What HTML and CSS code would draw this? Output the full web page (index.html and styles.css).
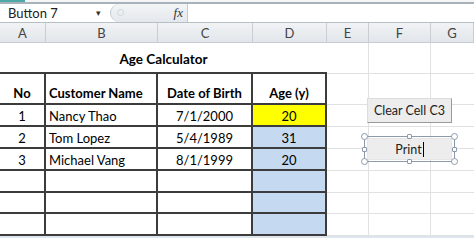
FILE: index.html
```
<!DOCTYPE html>
<html lang="en">
<head>
    <meta charset="UTF-8">
    <title>Age Calculator - Sheet</title>
    <link rel="stylesheet" href="styles.css">
</head>
<body>
    <!-- FORMULA BAR -->
    <div class="ribbon-edge"><span class="ribbon-tab"></span></div>
    <div class="formula-bar">
        <div class="name-box">Button 7</div>
        <div class="name-drop">&#9662;</div>
        <div class="fx-box">
            <span class="fx-dot"></span>
            <span class="fx">fx</span>
        </div>
        <div class="formula-input"></div>
    </div>

    <!-- COLUMN HEADERS -->
    <div class="col-heads">
        <div>A</div><div>B</div><div>C</div><div>D</div><div>E</div><div>F</div><div>G</div>
    </div>

    <!-- SHEET -->
    <div class="sheet">
        <div class="title">Age Calculator</div>
        <div class="g"></div><div class="g"></div><div class="g last"></div>

        <div class="t head">No</div>
        <div class="t head left">Customer Name</div>
        <div class="t head">Date of Birth</div>
        <div class="t head">Age (y)</div>
        <div class="g"></div><div class="g"></div><div class="g last"></div>

        <div class="t">1</div>
        <div class="t left">Nancy Thao</div>
        <div class="t">7/1/2000</div>
        <div class="t age yellow">20</div>
        <div class="g"></div><div class="g"></div><div class="g last"></div>

        <div class="t">2</div>
        <div class="t left">Tom Lopez</div>
        <div class="t">5/4/1989</div>
        <div class="t age">31</div>
        <div class="g"></div><div class="g"></div><div class="g last"></div>

        <div class="t">3</div>
        <div class="t left">Michael Vang</div>
        <div class="t">8/1/1999</div>
        <div class="t age">20</div>
        <div class="g"></div><div class="g"></div><div class="g last"></div>

        <div class="t"></div><div class="t"></div><div class="t"></div><div class="t age"></div>
        <div class="g"></div><div class="g"></div><div class="g last"></div>

        <div class="t"></div><div class="t"></div><div class="t"></div><div class="t age"></div>
        <div class="g"></div><div class="g"></div><div class="g last"></div>

        <div class="t"></div><div class="t"></div><div class="t"></div><div class="t age"></div>
        <div class="g"></div><div class="g"></div><div class="g last"></div>

        <!-- floating form buttons -->
        <div class="btn clear-btn">Clear Cell C3</div>
        <div class="btn print-btn">Print<span class="caret"></span></div>
        <div class="select-box">
            <span class="h tl"></span><span class="h tr"></span>
            <span class="h bl"></span><span class="h br"></span>
            <span class="s tm"></span><span class="s bm"></span>
            <span class="s ml"></span><span class="s mr"></span>
        </div>
    </div>
    <div class="tab-strip"></div>
</body>
</html>
```

FILE: styles.css
```
body {
    margin: 0;
    width: 474px;
    height: 238px;
    overflow: hidden;
    background: #fff;
    font-family: Lato, "Open Sans", sans-serif;
    color: #000;
}

/* formula bar */
.ribbon-edge {
    height: 2px;
    background: #f4f6f8;
    border-bottom: 2px solid #a9b2bb;
}
.ribbon-tab {
    display: block;
    width: 25px;
    height: 2px;
    background: #4fa8a8;
}
.formula-bar {
    display: flex;
    height: 18px;
    border-bottom: 1px solid #b7bec6;
    background: #fff;
}
.name-box {
    width: 88px;
    padding-left: 8px;
    font-size: 13px;
    line-height: 18px;
    color: #222;
}
.name-drop {
    width: 14px;
    font-size: 9px;
    line-height: 18px;
    color: #333;
}
.fx-box {
    position: relative;
    width: 76px;
    background: linear-gradient(#f3f5f7, #e4e8ec);
    border-radius: 9px 0 0 9px;
    border-left: 1px solid #c3cad1;
}
.fx-dot {
    position: absolute;
    left: 6px;
    top: 5px;
    width: 5px;
    height: 5px;
    border-radius: 50%;
    border: 1px solid #cfd5db;
}
.fx {
    position: absolute;
    right: 4px;
    top: 1px;
    font-family: "Liberation Serif", serif;
    font-style: italic;
    font-size: 13px;
    color: #333;
}
.formula-input {
    flex: 1;
    border-left: 1px solid #c3cad1;
}

/* column headers */
.col-heads {
    display: grid;
    grid-template-columns: 46px 112px 95px 74px 42px 62px 1fr;
    height: 19px;
    background: linear-gradient(#f1f3f5, #e2e6ea);
    border-bottom: 1px solid #c6ccd3;
}
.col-heads div {
    border-right: 1px solid #c9ced4;
    text-align: center;
    font-size: 13px;
    line-height: 20px;
    color: #444;
}

/* sheet grid */
.sheet {
    position: relative;
    display: grid;
    grid-template-columns: 46px 112px 95px 74px 42px 62px 1fr;
    grid-template-rows: 31px 31px 22px 22px 22px 22px 21px 22px;
    font-size: 13px;
}
.sheet > div {
    box-sizing: border-box;
}
.title {
    grid-column: 1 / 5;
    border-bottom: 2px solid #3c3c3c;
    text-align: center;
    font-weight: bold;
    font-size: 13.5px;
    line-height: 33px;
}
.g {
    border-right: 1px solid #dfe1e3;
    border-bottom: 1px solid #dfe1e3;
}
.g.last {
    border-right: none;
}
.t {
    border-right: 2px solid #3c3c3c;
    border-bottom: 2px solid #3c3c3c;
    display: flex;
    align-items: flex-end;
    justify-content: center;
    line-height: 17px;
}
.t.left {
    justify-content: flex-start;
    padding-left: 3px;
}
.t.head {
    font-weight: bold;
    padding-bottom: 1px;
}
.age {
    background: #c5d9f1;
}
.yellow {
    background: #ffff00;
}

/* form buttons */
.btn {
    position: absolute;
    left: 367px;
    width: 85px;
    height: 25px;
    box-sizing: border-box;
    background: #ededed;
    border: 1px solid #dcdcdc;
    border-right-color: #9a9a9a;
    border-bottom-color: #9a9a9a;
    font-size: 12.5px;
    line-height: 23px;
    text-align: center;
    color: #222;
}
.clear-btn {
    top: 55px;
}
.print-btn {
    top: 95px;
    height: 22px;
    line-height: 21px;
    border-color: #e6e6e6;
}
.caret {
    display: inline-block;
    width: 1px;
    height: 15px;
    margin-left: 1px;
    vertical-align: -3px;
    background: #000;
}
.select-box {
    position: absolute;
    left: 364px;
    top: 93px;
    width: 91px;
    height: 26px;
    border: 1px solid #8c9aaa;
    box-sizing: border-box;
}
.h, .s {
    position: absolute;
    box-sizing: border-box;
    background: #fff;
    border: 1px solid #8c9aaa;
}
.h {
    width: 7px;
    height: 7px;
    border-radius: 50%;
}
.s {
    width: 5px;
    height: 5px;
    border-radius: 1px;
}
.tl { left: -4px; top: -4px; }
.tr { right: -4px; top: -4px; }
.bl { left: -4px; bottom: -4px; }
.br { right: -4px; bottom: -4px; }
.tm { left: 42px; top: -3px; }
.bm { left: 42px; bottom: -3px; }
.ml { left: -3px; top: 10px; }
.mr { right: -3px; top: 10px; }

.tab-strip {
    height: 2px;
    background: #dfe5ec;
}
```
